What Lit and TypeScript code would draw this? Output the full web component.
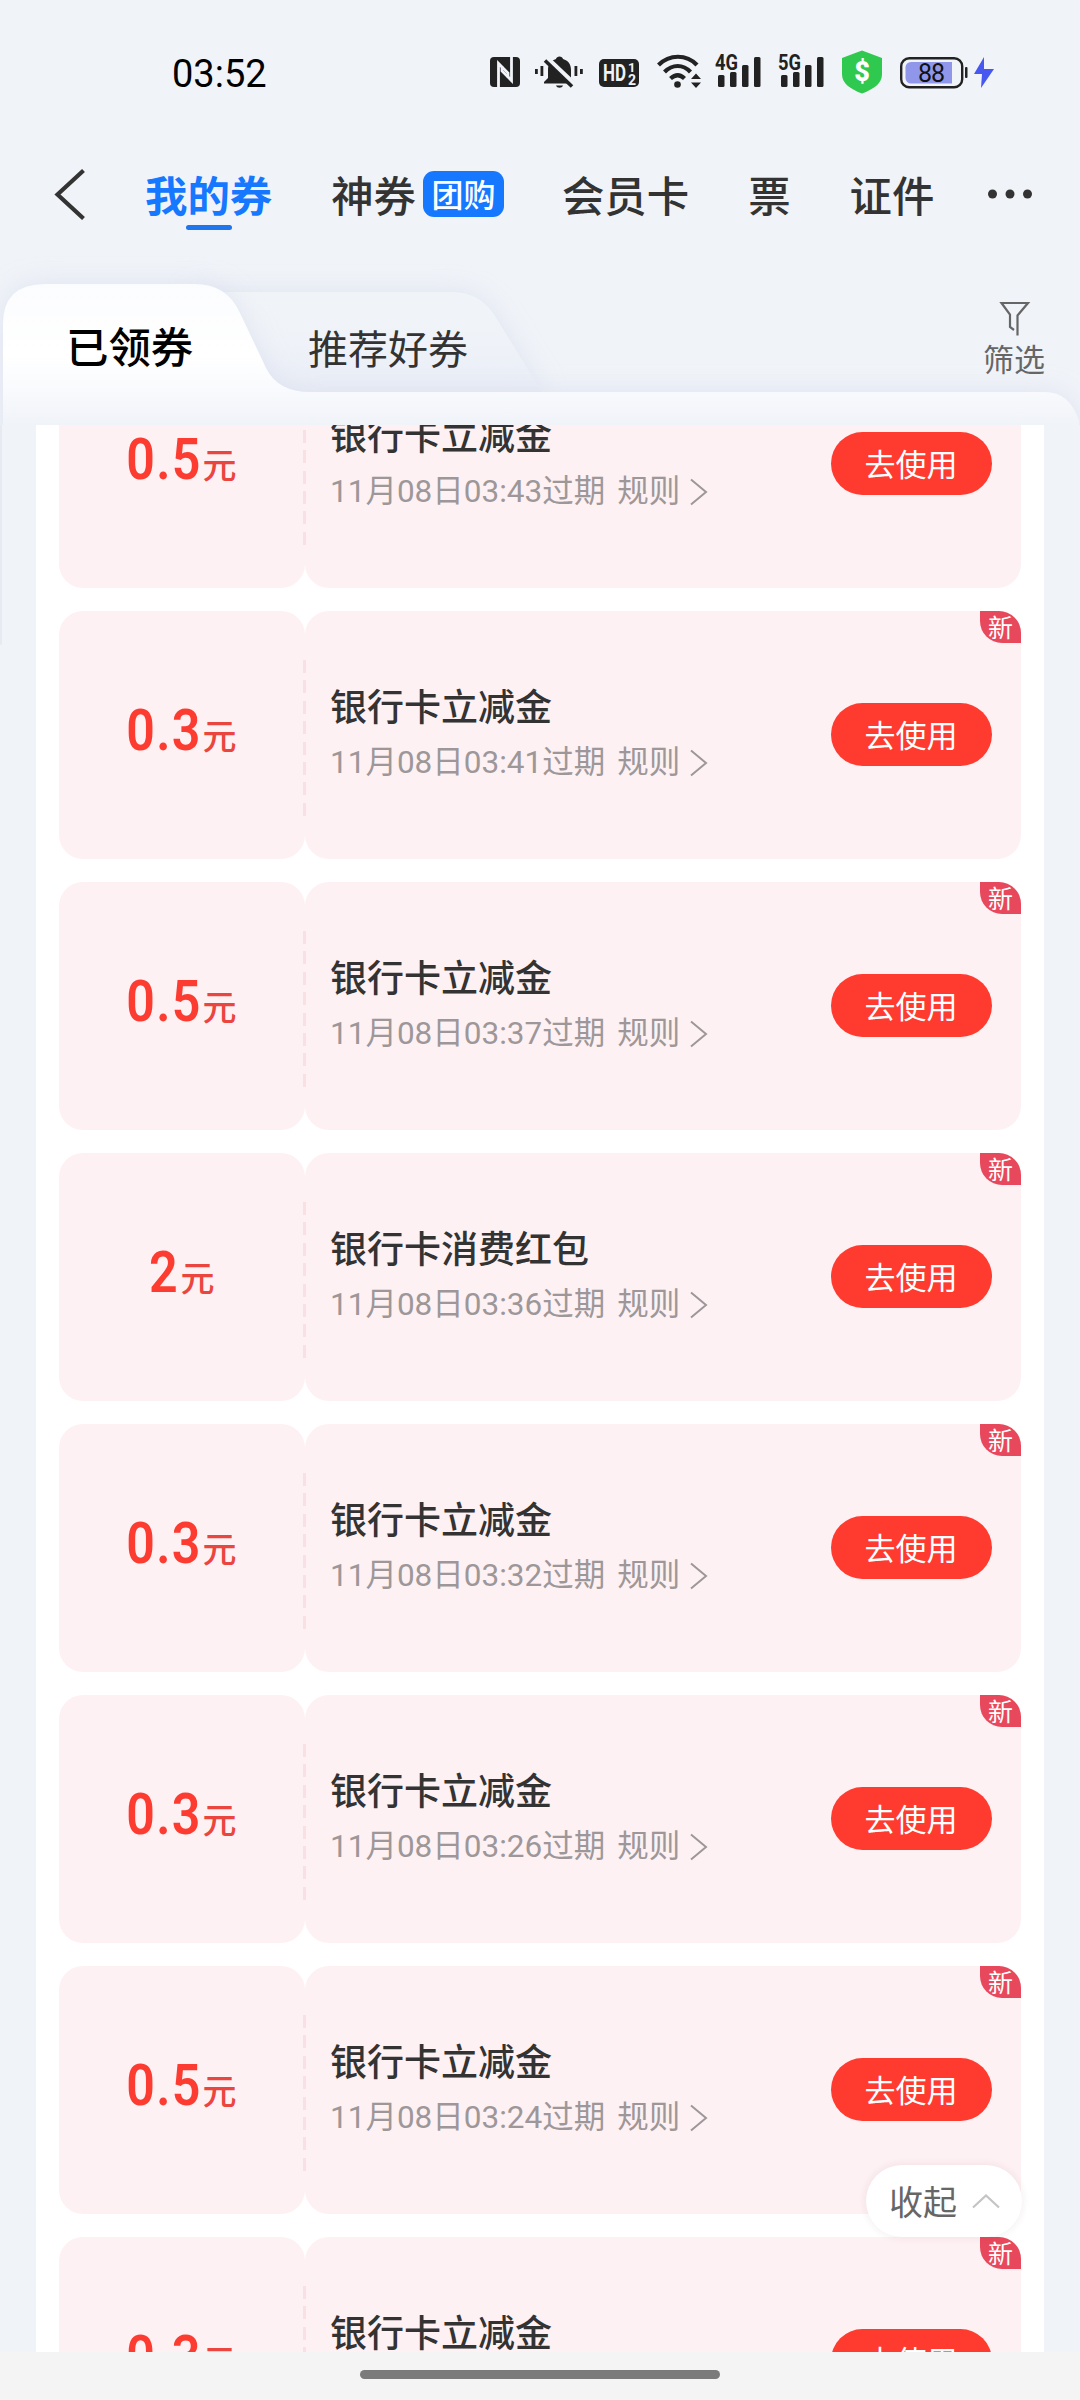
import { LitElement, html, css, svg, nothing } from "lit";
import { customElement, property } from "lit/decorators.js";
import { classMap } from "lit/directives/class-map.js";

interface Coupon {
  amount: string;
  title: string;
  time?: string;
}

const COUPONS: Coupon[] = [
  { amount: "0.5", title: "银行卡立减金", time: "03:43" },
  { amount: "0.3", title: "银行卡立减金", time: "03:41" },
  { amount: "0.5", title: "银行卡立减金", time: "03:37" },
  { amount: "2", title: "银行卡消费红包", time: "03:36" },
  { amount: "0.3", title: "银行卡立减金", time: "03:32" },
  { amount: "0.3", title: "银行卡立减金", time: "03:26" },
  { amount: "0.5", title: "银行卡立减金", time: "03:24" },
  { amount: "0.3", title: "银行卡立减金" },
];

@customElement("status-bar")
class StatusBar extends LitElement {
  static styles = css`
    :host { display: flex; align-items: center; height: 143px; box-sizing: border-box; padding: 6px 0 0 172px; }
    .time { font: 400 38px/44px Roboto, sans-serif; color: #000; width: 308px; margin-top: -2px; }
    .icons { display: block; }
    text { font-family: Roboto, sans-serif; }
  `;

  private bars(x: number, label: string) {
    return svg`
      <g fill="#222">
        <rect x=${x + 3} y="30" width="6.5" height="12" rx="1.5"/>
        <rect x=${x + 15} y="27" width="6.5" height="15" rx="1.5"/>
        <rect x=${x + 27} y="20" width="6.5" height="22" rx="1.5"/>
        <rect x=${x + 39} y="12" width="6.5" height="30" rx="1.5"/>
        <text x=${x} y="25" font-size="21.500" font-weight="700" textLength="23" lengthAdjust="spacingAndGlyphs">${label}</text>
      </g>`;
  }

  render() {
    return html`
      <div class="time">03:52</div>
      <svg class="icons" width="530" height="60" viewBox="0 0 530 60">
        <rect x="10" y="12" width="30" height="30" rx="4" fill="#222"/>
        <path d="M18.500 43V18.500L28 28v4.500" fill="none" stroke="#f0f3f8" stroke-width="2.800"/>
        <path d="M31.500 11v24.500L22 26v-4.500" fill="none" stroke="#f0f3f8" stroke-width="2.800"/>
        <g fill="#222">
          <path d="M64 38.500V37l4-4v-8c0-6 3-9.500 8-11 .5-3.500 6.500-3.500 7 0 5 1.500 8 5 8 11v8l4 4v1.500z"/>
          <path d="M76 40.500h7c-1 3-6 3-7 0z"/>
          <rect x="55" y="24" width="2.800" height="5"/><rect x="60.500" y="21" width="2.800" height="10"/>
          <rect x="94.500" y="21" width="2.800" height="10"/><rect x="100" y="24" width="2.800" height="5"/>
        </g>
        <path d="M67 14L94.500 40" stroke="#f0f3f8" stroke-width="6"/>
        <path d="M65 15.500L92 41.500" stroke="#222" stroke-width="3.600"/>
        <rect x="119" y="14" width="40" height="28" rx="5" fill="#222"/>
        <text x="123" y="36" font-size="23" font-weight="700" fill="#f0f3f8" textLength="23" lengthAdjust="spacingAndGlyphs">HD</text>
        <text x="148" y="27" font-size="13" font-weight="700" fill="#f0f3f8">1</text>
        <text x="148" y="39.500" font-size="14" font-weight="700" fill="#f0f3f8">2</text>
        <g fill="none" stroke="#222" stroke-width="4.200">
          <path d="M178.500 20c11-11 28-11 38.500 0"/>
          <path d="M184.500 27c8-8 18.500-8 26 0"/>
          <path d="M190.500 33.500c5-4.500 9.500-4.500 14 0"/>
        </g>
        <circle cx="197.500" cy="39.500" r="3.300" fill="#222"/>
        <path d="M211 34l5-5.500 5 5.500zM211 37.500l5 5.500 5-5.500z" fill="#222"/>
        ${this.bars(235, "4G")}
        ${this.bars(298, "5G")}
        <path d="M382 5.500l20 7.500v16.500c0 9-9 15-20 19-11-4-20-10-20-19V13z" fill="#30c94f"/>
        <text x="382" y="36" font-size="27" font-weight="900" fill="#fff" text-anchor="middle">$</text>
        <rect x="421.200" y="13.200" width="61" height="29" rx="8" fill="none" stroke="#222" stroke-width="2.400"/>
        <path d="M431 17h41v21.500h-41a5.500 5.500 0 0 1-5.500-5.500v-10.500a5.500 5.500 0 0 1 5.500-5.500z" fill="#9096ea"/>
        <rect x="485" y="22" width="2.500" height="11" rx="1" fill="#222"/>
        <text x="451.500" y="36.500" font-size="25" fill="#111" text-anchor="middle" textLength="27">88</text>
        <path d="M504 12l-10 17h8l-1 14 13-19h-10z" fill="#4658f0"/>
      </svg>
    `;
  }
}

@customElement("nav-tabs")
class NavTabs extends LitElement {
  static styles = css`
    :host { display: flex; align-items: center; height: 106px; box-sizing: border-box; padding: 0 0 4px 53px;
      font: 500 42.400px/60px "Noto Sans CJK SC", sans-serif; color: #333; white-space: nowrap; }
    .back { width: 92px; display: flex; }
    .tab { margin-right: 59px; }
    .active { color: #1677ff; font-weight: 700; position: relative; }
    .active::after { content: ""; position: absolute; left: 41px; top: 61px; width: 46px; height: 5px;
      border-radius: 3px; background: #1f75ee; }
    .grouped { display: flex; align-items: center; gap: 7px; margin-right: 58px; }
    .badge { width: 81px; height: 46px; border-radius: 11px; background: #1677ff; color: #fff;
      font-size: 32px; line-height: 44px; text-align: center; }
    .more { display: flex; margin-left: -7px; }
  `;

  render() {
    return html`
      <div class="back">
        <svg width="34" height="52" viewBox="0 0 34 52"><path d="M30.500 2.500L4.500 26.500l26 24" fill="none" stroke="#333" stroke-width="4.200"/></svg>
      </div>
      <div class="tab active">我的券</div>
      <div class="tab grouped"><span>神券</span><span class="badge">团购</span></div>
      <div class="tab">会员卡</div>
      <div class="tab">票</div>
      <div class="tab">证件</div>
      <div class="more">
        <svg width="48" height="12" viewBox="0 0 48 12" fill="#333"><circle cx="6.500" cy="6" r="4.500"/><circle cx="24" cy="6" r="4.500"/><circle cx="41.500" cy="6" r="4.500"/></svg>
      </div>
    `;
  }
}

@customElement("folder-tabs")
class FolderTabs extends LitElement {
  static styles = css`
    :host { display: block; position: relative; height: 176px; font-family: "Noto Sans CJK SC", sans-serif; }
    .shape { position: absolute; left: 0; top: 0; }
    .labels { position: relative; display: flex; height: 176px; box-sizing: border-box; padding: 43px 35px 0 66px; }
    .current { width: 242px; font-size: 42.400px; line-height: 106px; font-weight: 500; color: #000; }
    .other { flex: 1; font-size: 40px; line-height: 110px; color: #333; }
    .filter { display: flex; flex-direction: column; align-items: center; font-size: 31px; line-height: 46px; color: #666; padding-top: 7px; }
    .filter svg { display: block; margin-bottom: -2px; }
  `;

  render() {
    return html`
      <svg class="shape" width="1080" height="176" viewBox="0 0 1080 176">
        <defs>
          <linearGradient id="front" x1="0" y1="35" x2="0" y2="176" gradientUnits="userSpaceOnUse">
            <stop offset="0" stop-color="#fbfcfe"/><stop offset=".5" stop-color="#ffffff"/>
            <stop offset=".76" stop-color="#f8fafd"/><stop offset="1" stop-color="#f0f3f8"/>
          </linearGradient>
          <linearGradient id="behind" x1="0" y1="43" x2="0" y2="143" gradientUnits="userSpaceOnUse">
            <stop offset="0" stop-color="#f1f4f7"/><stop offset=".5" stop-color="#eff2f8"/><stop offset="1" stop-color="#e9edf6"/>
          </linearGradient>
          <filter id="soft" x="-10%" y="-40%" width="120%" height="180%"><feGaussianBlur stdDeviation="13"/></filter>
        </defs>
        <path d="M190 43H452Q480 43 495 67L545 148H190z" fill="#d9deed" filter="url(#soft)" opacity=".75"/>
        <path d="M190 43H452Q480 43 495 67L545 148H190z" fill="url(#behind)"/>
        <path d="M3 190V75Q3 35 45 35H195Q227 35 240 64L266 119Q278 143 310 143H1045Q1070 143 1079 172V190z" fill="#d9deed" filter="url(#soft)" opacity=".75"/>
        <path d="M3 176V75Q3 35 45 35H195Q227 35 240 64L266 119Q278 143 310 143H1045Q1070 143 1079 172V176z" fill="url(#front)"/>
      </svg>
      <div class="labels">
        <div class="current">已领券</div>
        <div class="other">推荐好券</div>
        <div class="filter">
          <svg width="34" height="38" viewBox="0 0 34 38"><path d="M20.500 36.500V16.500L31 4H4.500L13 15.500V28l4 3" fill="none" stroke="#666" stroke-width="2.200"/></svg>
          <span>筛选</span>
        </div>
      </div>
    `;
  }
}

@customElement("coupon-card")
class CouponCard extends LitElement {
  @property({ attribute: false }) coupon!: Coupon;

  static styles = css`
    :host { display: flex; position: relative; height: 248px; font-family: "Noto Sans CJK SC", sans-serif; }
    .amount { width: 246px; box-sizing: border-box; border-radius: 24px; background: #fef1f3; display: flex;
      justify-content: center; align-items: baseline; padding-top: 87px; color: #fd3c31; }
    .value { font: 600 57px/66px Roboto, sans-serif; letter-spacing: 1.500px; transform: scaleX(.88);
      transform-origin: right; margin-left: -12px; }
    .value.single { margin-left: -4px; }
    .unit { font-size: 34px; line-height: 50px; font-weight: 500; color: #ea453f; margin-left: 1px; transform: translateY(-1px); }
    .detail { flex: 1; display: flex; align-items: center; border-radius: 24px; background: #fef1f3;
      padding: 0 29px 2px 25px; }
    .dash { position: absolute; left: 244px; top: 49px; width: 3px; height: 156px;
      background: repeating-linear-gradient(#f9e0e4 0 13px, transparent 13px 20.400px); }
    .info { flex: 1; white-space: nowrap; margin-top: -4px; }
    .title { font-size: 37px; line-height: 54px; font-weight: 500; color: #333; }
    .meta { display: flex; align-items: center; height: 46px; font: 400 31.500px/46px Roboto, "Noto Sans CJK SC", sans-serif;
      color: #9d9799; margin-top: 8px; }
    .rule { margin-left: 12px; }
    .meta svg { margin-left: 9px; }
    .use { width: 161px; height: 63px; border-radius: 32px; background: #ff3b30; color: #fff; font-size: 31px;
      line-height: 61px; text-align: center; text-indent: -1px; }
    .new { position: absolute; right: 0; top: 0; width: 41px; height: 32px; border-radius: 0 22px 0 22px;
      background: #e8485b; color: #fff; font-size: 25px; line-height: 31px; text-align: center; }
  `;

  render() {
    const { amount, title, time } = this.coupon;
    return html`
      <div class="amount">
        <span class=${classMap({ value: true, single: amount.length === 1 })}>${amount}</span><span class="unit">元</span>
      </div>
      <div class="detail">
        <div class="info">
          <div class="title">${title}</div>
          <div class="meta">
            ${time
              ? html`<span>11月08日${time}过期</span><span class="rule">规则</span>
                <svg width="20" height="28" viewBox="0 0 20 28"><path d="M2 1.500L17 14 2 26.500" fill="none" stroke="#9d9799" stroke-width="2"/></svg>`
              : nothing}
          </div>
        </div>
        <div class="use">去使用</div>
      </div>
      <div class="dash"></div>
      <div class="new">新</div>
    `;
  }
}

@customElement("app-root")
class AppRoot extends LitElement {
  static styles = css`
    :host { display: flex; flex-direction: column; position: relative; width: 1080px; height: 2400px; overflow: hidden;
      background: #f0f3f8; }
    .viewport { height: 1927px; overflow: hidden; border-left: 2px solid transparent;
      border-image: linear-gradient(#e7eaf1 0 220px, transparent 221px) 1; padding: 0 36px 0 34px; display: flex; }
    .list { flex: 1; height: 2200px; background: #fff; padding: 0 23px; margin-top: -85px; display: flex; flex-direction: column; gap: 23px; }
    .collapse { position: absolute; left: 866px; top: 2165px; width: 156px; height: 72px; border-radius: 36px;
      box-sizing: border-box; padding: 0 0 1px 23px; background: #fff; box-shadow: 0 0 8px rgba(90, 30, 40, .09);
      display: flex; align-items: center; gap: 14px; font: 400 34px/50px "Noto Sans CJK SC", sans-serif; color: #666; }
    .home { height: 48px; background: #f4f4f4; display: flex; justify-content: center; }
    .handle { width: 360px; height: 9px; border-radius: 5px; background: #7b7b7b; margin-top: 18px; }
  `;

  render() {
    return html`
      <status-bar></status-bar>
      <nav-tabs></nav-tabs>
      <folder-tabs></folder-tabs>
      <div class="viewport">
        <div class="list">${COUPONS.map((c) => html`<coupon-card .coupon=${c}></coupon-card>`)}</div>
      </div>
      <div class="home"><div class="handle"></div></div>
      <div class="collapse"><span>收起</span>
        <svg width="30" height="18" viewBox="0 0 30 18"><path d="M2 15.500L15 3.500l13 12" fill="none" stroke="#c4c4c4" stroke-width="2.200"/></svg>
      </div>
    `;
  }
}
